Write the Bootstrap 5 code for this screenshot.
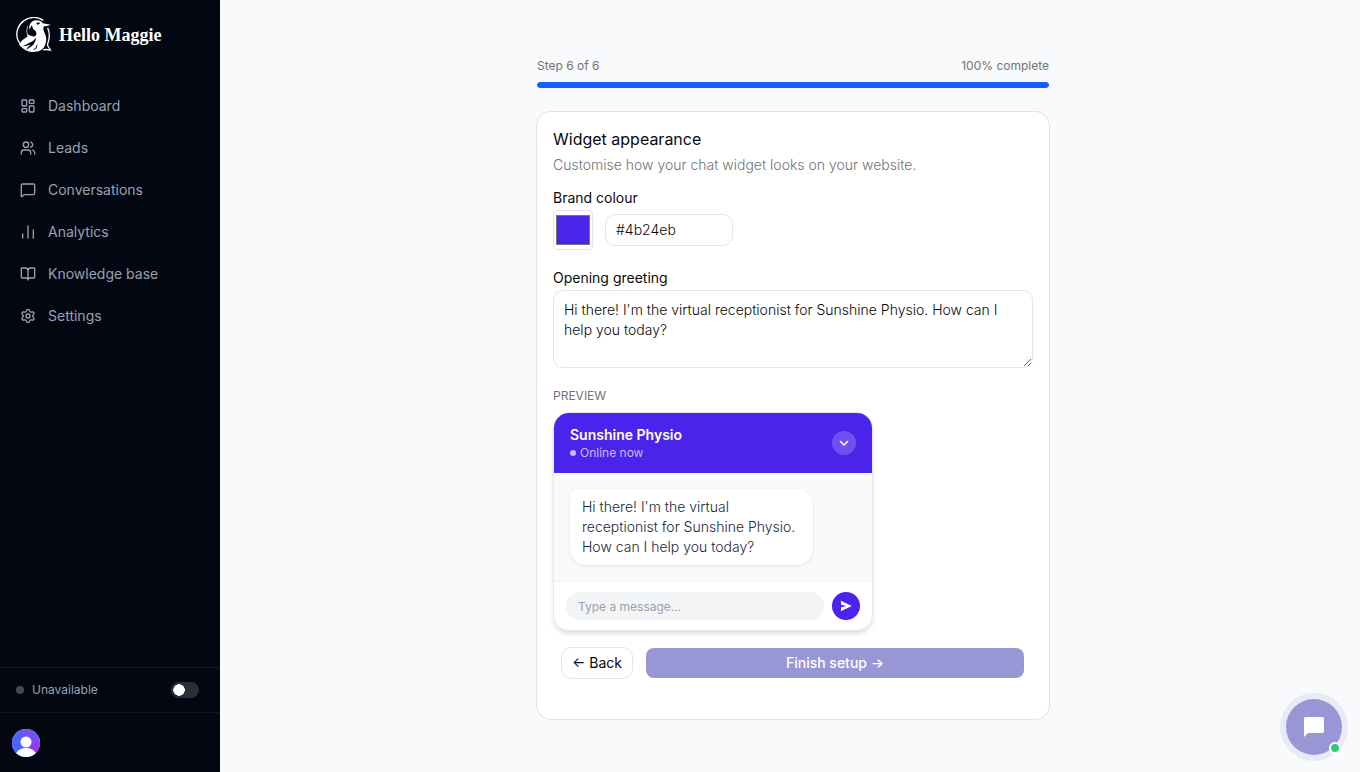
<!DOCTYPE html>
<html lang="en">
<head>
<meta charset="utf-8">
<meta name="viewport" content="width=device-width, initial-scale=1">
<title>Hello Maggie – Setup</title>
<link href="https://cdn.jsdelivr.net/npm/bootstrap@5.3.0/dist/css/bootstrap.min.css" rel="stylesheet">
<style>
  body { font-family: Inter, "Open Sans", sans-serif; font-size: 14px; line-height: 20px; color: #0a0a0a; background: #f9fafc; }
  svg { display: block; }
  .sidebar { width: 220px; background: #030712; color: #99a1af; position: sticky; top: 0; }
  .brand { padding: 17px 16px; gap: 7px; color: #fff; font: bold 18px/36px "Liberation Serif", serif; }
  .side-menu { padding: 16px 8px; gap: 2px; }
  .side-menu .nav-link { padding: 10px 12px; gap: 12px; color: #99a1af; font-size: 14px; }
  .side-menu .nav-link:hover { color: #fff; }
  .stroked { fill: none; stroke: currentColor; stroke-width: 2; stroke-linecap: round; stroke-linejoin: round; }
  .stroked.heavy { stroke-width: 3; }
  .side-row { border-top: 1px solid #11151f; }
  .status { padding: 14px 21px 14px 16px; font-size: 12px; line-height: 16px; }
  .status-dot { width: 8px; height: 8px; background: #454a55; }
  .status .form-switch { min-height: 0; }
  .status .form-check-input { width: 28px; height: 16px; margin: 0; border: 2px solid #2a2e38; background-color: #2a2e38; --bs-form-switch-bg: radial-gradient(circle closest-side, #fff 92%, transparent); background-image: radial-gradient(circle closest-side, #fff 92%, transparent); background-size: 12px 12px; }
  .account { padding: 16px 12px 15px; }
  .content { padding: 56px 24px 52px 30px; }
  .wizard { max-width: 512px; }
  .step-info { font-size: 12px; color: #737373; }
  .step-bar { height: 6px; margin: 6px 0 24px; background: #dbe4f8; }
  .step-bar .progress-bar { background: #155dfc; border-radius: 6px; }
  .panel { background: #fff; border-radius: 14px; box-shadow: 0 0 0 1px #e2e3e4; padding: 16px 16px 40px; }
  .panel h1 { font-size: 16px; line-height: 22px; font-weight: 400; margin-bottom: 5px; }
  .muted { color: #737373; }
  .intro, .bubble, .panel .form-control { font-weight: 300; }
  .field { margin-top: 13px; }
  .field + .field { margin-top: 18px; }
  .panel .form-label { margin-bottom: 2px; line-height: 20px; }
  .panel .form-control { font-size: 14px; line-height: 20px; border-color: #e5e5e5; border-radius: 10px; color: #0a0a0a; padding: 5px 10px; }
  .panel .form-control-color { width: 40px; height: 40px; padding: 0; background: #fff; border: 1px solid #e5e5e5; border-radius: 4px; }
  .form-control-color::-webkit-color-swatch-wrapper { padding: 4px 2px; }
  .panel .form-control-color::-webkit-color-swatch { border: 1px solid #767676 !important; border-radius: 0; }
  .colour-row { gap: 12px; }
  .hex { width: 128px; }
  .panel .greeting { height: 78px; padding: 9px 10px; }
  .caption { font-size: 12px; line-height: 16px; margin: 20px 0 8px; }
  .widget { max-width: 320px; border: 1px solid #e5e7eb; border-radius: 16px; box-shadow: 0 4px 6px -1px #0000001a, 0 2px 4px -2px #0000001a; }
  .widget-head { height: 60px; padding: 0 16px; background: #4b24eb; color: #fff; }
  .online { font-size: 12px; line-height: 16px; color: #c9bdf9; gap: 4px; }
  .online i { width: 6px; height: 6px; background: #c9bdf9; }
  .round-btn { border: 0; border-radius: 50%; padding: 0; color: #fff; display: grid; place-items: center; flex: none; }
  .collapse-btn { width: 24px; height: 24px; background: #6f50ef; }
  .send-btn { width: 28px; height: 28px; background: #4b24eb; }
  .widget-body { padding: 16px; background: #f9fafb; }
  .bubble { max-width: 85%; padding: 8px 12px; background: #fff; color: #1e2939; border-radius: 6px 16px 16px 16px; box-shadow: 0 1px 3px #0000001a; }
  .widget-foot { padding: 10px 12px; gap: 8px; border-top: 1px solid #f3f4f6; }
  .widget-foot .form-control { height: 28px; border: 0; border-radius: 14px; background: #f3f4f6; font-size: 12px; font-weight: 400; padding: 0 12px; }
  .widget-foot .form-control::placeholder { color: #99a1af; }
  .actions { padding: 0 9px 0 8px; margin-top: 16px; gap: 13px; }
  .actions .btn { font-size: 14px; line-height: 20px; border-radius: 8px; padding: 5px 10px; }
  .actions .back { border: 1px solid #e5e5e5; border-radius: 10px; background: #fff; color: #0a0a0a; }
  .actions .finish { background: #9896d5; border: 0; color: #fff; font-weight: 500; }
  .launcher { right: 18px; bottom: 17px; width: 56px; height: 56px; background: #9896d5; box-shadow: 0 0 0 6px #e8eaf6; }
  .launcher-dot { right: 1px; bottom: 1px; width: 12px; height: 12px; background: #2ecc71; border: 2px solid #fff; }
</style>
</head>
<body>
<div class="d-flex min-vh-100">
  <aside class="sidebar d-flex flex-column vh-100 flex-shrink-0">
    <div class="brand d-flex align-items-center">
      <svg width="36" height="36" viewBox="18 18 108 108" aria-hidden="true">
        <path d="M100 28A51 51 0 0 0 23 86L29 96M113 50Q121 68 116 88L112 102L121 117Q106 114 99 117" fill="none" stroke="#fff" stroke-width="4"/>
        <path d="M58 44Q64 28 80 28Q94 28 98 37L122 41Q112 46 102 46Q98 50 102 62Q111 76 108 92Q105 114 85 121Q55 129 35 109Q27 103 27 99Q38 84 52 77L53 70Q64 78 75 76Q83 69 76 59Q67 54 66 42Q61 48 58 57Z" fill="#fff"/>
        <path d="M79 37Q84 32 91 36Q87 41 82 41ZM38 106L69 90L78 80Q77 95 66 105L49 116Q52 107 63 101Q49 104 38 106ZM68 117Q79 111 82 99Q84 116 68 117Z" fill="#030712"/>
        <path d="M53 45Q47 60 53 74" fill="none" stroke="#fff" stroke-width="2"/>
      </svg>
      <span>Hello Maggie</span>
    </div>
    <nav class="side-menu nav flex-column flex-nowrap flex-grow-1" aria-label="Main">
      <a class="nav-link d-flex align-items-center" href="#"><svg class="stroked" width="16" height="16" viewBox="0 0 24 24"><rect x="3" y="3" width="7" height="9" rx="1"/><rect x="14" y="3" width="7" height="5" rx="1"/><rect x="14" y="12" width="7" height="9" rx="1"/><rect x="3" y="16" width="7" height="5" rx="1"/></svg>Dashboard</a>
      <a class="nav-link d-flex align-items-center" href="#"><svg class="stroked" width="16" height="16" viewBox="0 0 24 24"><path d="M16 21v-2a4 4 0 0 0-4-4H6a4 4 0 0 0-4 4v2M22 21v-2a4 4 0 0 0-3-3.87M16 3.13a4 4 0 0 1 0 7.75"/><circle cx="9" cy="7" r="4"/></svg>Leads</a>
      <a class="nav-link d-flex align-items-center" href="#"><svg class="stroked" width="16" height="16" viewBox="0 0 24 24"><path d="M22 17a2 2 0 0 1-2 2H6.8a2 2 0 0 0-1.4.6l-2.2 2.2A.7.7 0 0 1 2 21.3V5a2 2 0 0 1 2-2h16a2 2 0 0 1 2 2z"/></svg>Conversations</a>
      <a class="nav-link d-flex align-items-center" href="#"><svg class="stroked" width="16" height="16" viewBox="0 0 24 24"><path d="M4 21v-6M12 21V3M20 21V9"/></svg>Analytics</a>
      <a class="nav-link d-flex align-items-center" href="#"><svg class="stroked" width="16" height="16" viewBox="0 0 24 24"><path d="M12 7v14M3 18a1 1 0 0 1-1-1V4a1 1 0 0 1 1-1h5a4 4 0 0 1 4 4 4 4 0 0 1 4-4h5a1 1 0 0 1 1 1v13a1 1 0 0 1-1 1h-6a3 3 0 0 0-3 3 3 3 0 0 0-3-3z"/></svg>Knowledge base</a>
      <a class="nav-link d-flex align-items-center" href="#"><svg class="stroked" width="16" height="16" viewBox="0 0 24 24"><path d="M9.67 4.14a2.34 2.34 0 0 1 4.66 0 2.34 2.34 0 0 0 3.32 1.91 2.34 2.34 0 0 1 2.33 4.04 2.34 2.34 0 0 0 0 3.82 2.34 2.34 0 0 1-2.33 4.04 2.34 2.34 0 0 0-3.32 1.91 2.34 2.34 0 0 1-4.66 0 2.34 2.34 0 0 0-3.32-1.91 2.34 2.34 0 0 1-2.33-4.04 2.34 2.34 0 0 0 0-3.82 2.34 2.34 0 0 1 2.33-4.04 2.34 2.34 0 0 0 3.32-1.91"/><circle cx="12" cy="12" r="3"/></svg>Settings</a>
    </nav>
    <div class="side-row status d-flex align-items-center gap-2">
      <span class="status-dot rounded-circle"></span>
      <label for="available" class="flex-grow-1">Unavailable</label>
      <div class="form-switch p-0 m-0 d-flex"><input class="form-check-input" type="checkbox" role="switch" id="available"></div>
    </div>
    <div class="side-row account">
      <button class="round-btn" type="button" aria-label="Account">
        <svg width="28" height="28" viewBox="0 0 28 28"><defs><clipPath id="disc"><circle cx="14" cy="14" r="14"/></clipPath></defs><g clip-path="url(#disc)"><path fill="#7650f5" d="M0 0h28v28H0z"/><path fill="#4f63ff" d="M0 0h6Q10 5 9 14v14H0z"/><circle cx="26" cy="21" r="8" fill="#9838ee"/><circle cx="14" cy="13" r="5.5" fill="#fff"/><ellipse cx="14" cy="27" rx="10.5" ry="8" fill="#fff"/></g></svg>
      </button>
    </div>
  </aside>

  <main class="content flex-grow-1">
    <div class="wizard mx-auto">
      <div class="step-info d-flex justify-content-between"><span>Step 6 of 6</span><span>100% complete</span></div>
      <div class="progress step-bar" role="progressbar" aria-label="Setup progress" aria-valuenow="100" aria-valuemin="0" aria-valuemax="100"><div class="progress-bar w-100"></div></div>
      <form class="panel">
        <h1>Widget appearance</h1>
        <p class="intro muted mb-0">Customise how your chat widget looks on your website.</p>
        <div class="field">
          <label class="form-label d-block" for="colour">Brand colour</label>
          <div class="colour-row d-flex align-items-center">
            <input type="color" class="form-control-color" id="colour" value="#4b24eb">
            <input type="text" class="form-control hex" value="#4b24eb" aria-label="Brand colour hex value">
          </div>
        </div>
        <div class="field">
          <label class="form-label d-block" for="greeting">Opening greeting</label>
          <textarea class="form-control greeting" id="greeting">Hi there! I'm the virtual receptionist for Sunshine Physio. How can I help you today?</textarea>
        </div>
        <p class="caption muted">PREVIEW</p>
        <section class="widget overflow-hidden" aria-label="Widget preview">
          <div class="widget-head d-flex align-items-center justify-content-between">
            <div>
              <div class="fw-semibold">Sunshine Physio</div>
              <div class="online d-flex align-items-center"><i class="rounded-circle"></i>Online now</div>
            </div>
            <button class="round-btn collapse-btn" type="button" aria-label="Collapse"><svg class="stroked heavy" width="12" height="12" viewBox="0 0 24 24"><path d="m5 9 7 7 7-7"/></svg></button>
          </div>
          <div class="widget-body"><div class="bubble">Hi there! I'm the virtual receptionist for Sunshine Physio. How can I help you today?</div></div>
          <div class="widget-foot d-flex align-items-center">
            <input type="text" class="form-control" placeholder="Type a message..." aria-label="Message">
            <button class="round-btn send-btn" type="button" aria-label="Send"><svg width="12" height="12" viewBox="0 0 12 12" fill="currentColor"><path d="M.8.8 11.8 6 .8 11.2 1.2 7.2 6.5 6 1.2 4.8z"/></svg></button>
          </div>
        </section>
        <div class="actions d-flex align-items-center">
          <button class="btn back" type="button">← Back</button>
          <button class="btn finish flex-grow-1" type="submit">Finish setup →</button>
        </div>
      </form>
    </div>
  </main>
</div>
<button class="launcher round-btn position-fixed" type="button" aria-label="Open chat">
  <svg width="20" height="20" viewBox="0 0 20 20" fill="#fff"><path d="M1.5 0h17A1.5 1.5 0 0 1 20 1.500v13a1.500 1.500 0 0 1-1.500 1.500H4L0 20V1.500A1.500 1.500 0 0 1 1.500 0z"/></svg>
  <span class="launcher-dot position-absolute rounded-circle"></span>
</button>
<script src="https://cdn.jsdelivr.net/npm/bootstrap@5.3.0/dist/js/bootstrap.bundle.min.js"></script>
</body>
</html>
